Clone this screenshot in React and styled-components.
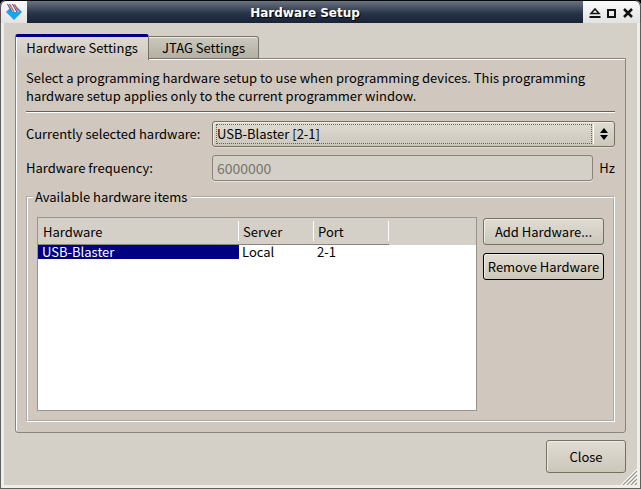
import React from "react";
import styled, { createGlobalStyle } from "styled-components";

const GlobalStyle = createGlobalStyle`
  *, *::before, *::after { box-sizing: border-box; }
  body { margin: 0; background: #000; }
  button, input, select { font: inherit; color: inherit; margin: 0; }
`;

const Window = styled.main`
  display: flex;
  flex-direction: column;
  min-height: 100vh;
  background: #d4d0c8;
  color: #000;
  font: 13px/18px "Noto Sans CJK SC", "Noto Sans", sans-serif;
  border-radius: 6px 6px 0 0;
  overflow: hidden;
`;

const TitleBar = styled.header`
  display: flex;
  height: 23px;
  border-top: 1px solid #05070b;
  background: linear-gradient(#6d7380 0, #4a5463 6px, #28354a 12px, #182434 100%);
`;

const TitleEnd = styled.div`
  display: flex;
  align-items: center;
  justify-content: center;
  gap: 3px;
  width: ${(p) => p.$width}px;
  background: linear-gradient(#fafafa, #e2e2e2);
  border: solid #555;
  border-width: ${(p) => (p.$right ? "0 1px 0 0" : "0 0 0 1px")};
  border-radius: ${(p) => (p.$right ? "0 6px 0 0" : "6px 0 0 0")};
`;

const Title = styled.h1`
  flex: 1;
  margin: 0;
  color: #fff;
  text-align: center;
  font: bold 12px/24px "DejaVu Sans", sans-serif;
  text-shadow: 1px 1px 1px #000;
`;

const WindowButton = styled.button`
  display: flex;
  padding: 0;
  border: 0;
  background: none;
`;

const Body = styled.div`
  flex: 1;
  display: flex;
  flex-direction: column;
  padding: 11px 11px 12px;
  border: solid #eeeeea;
  border-width: 0 3px 3px;
`;

const Frame = styled.div`
  flex: 1;
  display: flex;
  border: solid #60605c;
  border-width: 0 1px 1px;
`;

const TabList = styled.div`
  display: flex;
  align-items: flex-end;
  height: 25px;
  margin-bottom: -1px;
`;

const Tab = styled.button`
  position: relative;
  padding: 0;
  color: #000;
  border: 1px solid #77736a;
  ${(p) =>
    p.$active
      ? `
    width: 134px;
    height: 26px;
    padding-bottom: 2px;
    margin-bottom: -1px;
    border-top: 3px solid #000080;
    border-bottom: 0;
    border-radius: 3px 3px 0 0;
    background: linear-gradient(#dedad2, #d0c8be);
    box-shadow: inset 1px 0 #fff;
  `
      : `
    width: 110px;
    height: 23px;
    border-left: 0;
    border-radius: 0 3px 0 0;
    background: linear-gradient(#cbc8bd, #b4b0a3);
    box-shadow: inset 0 1px #eeece6;
  `}
`;

const Panel = styled.section`
  flex: 1;
  display: flex;
  flex-direction: column;
  padding: 10px 10px 10px;
  border: 1px solid #8b8377;
  border-radius: 0 0 3px 3px;
  background: #d0c8be;
  box-shadow: inset 1px 1px #fff;
`;

const Intro = styled.p`
  margin: 0;
`;

const Divider = styled.hr`
  width: 100%;
  margin: 6px 0 8px;
  border: solid;
  border-width: 1px 0;
  border-color: #66625b #fff #fff;
`;

const Form = styled.div`
  display: grid;
  grid-template-columns: 180px 1fr auto;
  column-gap: 6px;
  row-gap: 8px;
  align-items: center;
`;

const SelectBox = styled.div`
  grid-column: 2 / 4;
  display: grid;
  grid-template-columns: 1fr 21px;
  height: 26px;
  border: 1px solid #77705f;
  border-radius: 3px;
  background: linear-gradient(#e0dcd3, #cbc7bb);
  box-shadow: inset 1px 1px #eeece6, 0 1px #e2ddd5;
`;

const Select = styled.select`
  grid-area: 1 / 1 / 2 / 3;
  appearance: none;
  min-width: 0;
  margin: 2px 22px 2px 3px;
  padding: 0;
  border: 1px dotted #68645c;
  background: none;
  outline: 0;
`;

const Stepper = styled.span`
  grid-area: 1 / 2 / 2 / 3;
  display: flex;
  align-items: center;
  justify-content: center;
  margin: 2px 0;
  border-left: 1px solid #fff;
  pointer-events: none;
`;

const Input = styled.input`
  min-width: 0;
  width: 100%;
  height: 26px;
  padding: 0 4px;
  border: 1px solid #8b8377;
  border-radius: 3px;
  background: #d4d0c8;
  color: #77746d;
  font-size: 14px;
  box-shadow: 0 1px #e9e5de;
`;

const Group = styled.fieldset`
  flex: 1;
  display: flex;
  gap: 6px;
  min-width: 0;
  margin: 7px 0 0;
  padding: 10px 9px 9px;
  border: 2px groove #fff;
`;

const Legend = styled.legend`
  margin-left: -4px;
  padding: 0 4px 0 2px;
`;

const TableFrame = styled.div`
  flex: 1;
  margin-top: 1px;
  border: 1px solid #99958b;
  background: #fff;
`;

const Table = styled.table`
  width: 100%;
  table-layout: fixed;
  border-collapse: separate;
  border-spacing: 0;
  text-align: left;
`;

const HeadCell = styled.th`
  width: ${(p) => p.$width};
  height: 27px;
  padding: 2px 4px 0;
  font-weight: normal;
  background: #d4d0c8;
  &:first-child { padding-left: 5px; }
  ${(p) =>
    p.$width !== "auto" &&
    `
    border-bottom: 1px solid #8b8377;
    background: linear-gradient(#fff, #fff) right 3px / 1px 20px no-repeat #d4d0c8;
  `}
`;

const Cell = styled.td`
  height: 14px;
  padding: 0 3px;
  line-height: 14px;
  &:first-child { padding-left: 4px; }
  ${(p) => p.$selected && "background: #000080; color: #fff;"}
`;

const Actions = styled.div`
  display: flex;
  flex-direction: column;
  gap: 8px;
  width: 121px;
  padding-top: 2px;
`;

const Button = styled.button`
  height: ${(p) => (p.$large ? 33 : 27)}px;
  padding: 0;
  white-space: nowrap;
  border: 1px solid ${(p) => (p.$focused ? "#000" : "#77705f")};
  border-radius: 3px;
  background: linear-gradient(#e0dcd3, #cbc7bb);
  box-shadow: inset 1px 1px #eeece6;
  ${(p) => p.$large && "width: 80px;"}
`;

const Footer = styled.footer`
  display: flex;
  justify-content: flex-end;
  padding-top: 7px;
`;

const Grip = styled.svg`
  position: absolute;
  right: 4px;
  bottom: 4px;
`;

const Shell = styled.div`
  position: relative;
`;

const Logo = () => (
  <svg width="18" height="18" viewBox="0 0 18 18" aria-hidden="true">
    <path d="M9 1 17 9 9 17 1 9Z" fill="#14a6f0" />
    <path d="M2 1h7l5 8H7Z" fill="#fff" />
    <path d="M2.500 1l4.500 8M7.500 1l4.500 8" stroke="#3a5fa8" strokeWidth="1.200" />
    <path d="M4.500 1l4.500 8M9.500 1.500l4 7" stroke="#e8503f" strokeWidth="1.500" />
  </svg>
);

const items = [{ hardware: "USB-Blaster", server: "Local", port: "2-1" }];

export default function App() {
  return (
    <Shell>
      <GlobalStyle />
      <Window>
        <TitleBar>
          <TitleEnd $width={27}>
            <Logo />
          </TitleEnd>
          <Title>Hardware Setup</Title>
          <TitleEnd $width={58} $right>
            <WindowButton aria-label="Shade">
              <svg width="14" height="14" fill="none" stroke="#111">
                <path d="M3 8.500h8L7 4Z" strokeWidth="1.500" />
                <path d="M1.500 12h11" strokeWidth="2" />
              </svg>
            </WindowButton>
            <WindowButton aria-label="Maximize">
              <svg width="14" height="14" fill="none" stroke="#111">
                <rect x="3" y="5" width="7" height="7" strokeWidth="2" />
              </svg>
            </WindowButton>
            <WindowButton aria-label="Close window">
              <svg width="14" height="14" fill="none" stroke="#111">
                <path d="m2 4 8 8M10 4l-8 8" strokeWidth="2.500" />
              </svg>
            </WindowButton>
          </TitleEnd>
        </TitleBar>
        <Frame>
          <Body>
            <TabList role="tablist">
              <Tab role="tab" aria-selected="true" $active>
                Hardware Settings
              </Tab>
              <Tab role="tab" aria-selected="false">
                JTAG Settings
              </Tab>
            </TabList>
            <Panel role="tabpanel">
              <Intro>
                Select a programming hardware setup to use when programming devices. This programming
                hardware setup applies only to the current programmer window.
              </Intro>
              <Divider />
              <Form>
                <label htmlFor="hardware">Currently selected hardware:</label>
                <SelectBox>
                  <Select id="hardware" defaultValue="usb">
                    <option value="usb">USB-Blaster [2-1]</option>
                  </Select>
                  <Stepper>
                    <svg width="8" height="12" aria-hidden="true">
                      <path d="M0 5 4 0l4 5ZM0 7h8l-4 5Z" />
                    </svg>
                  </Stepper>
                </SelectBox>
                <label htmlFor="frequency">Hardware frequency:</label>
                <Input id="frequency" defaultValue="6000000" disabled />
                <span>Hz</span>
              </Form>
              <Group>
                <Legend>Available hardware items</Legend>
                <TableFrame>
                  <Table>
                    <thead>
                      <tr>
                        <HeadCell $width="201px">Hardware</HeadCell>
                        <HeadCell $width="75px">Server</HeadCell>
                        <HeadCell $width="75px">Port</HeadCell>
                        <HeadCell as="td" $width="auto" />
                      </tr>
                    </thead>
                    <tbody>
                      {items.map((item) => (
                        <tr key={item.hardware}>
                          <Cell $selected>{item.hardware}</Cell>
                          <Cell>{item.server}</Cell>
                          <Cell>{item.port}</Cell>
                          <Cell />
                        </tr>
                      ))}
                    </tbody>
                  </Table>
                </TableFrame>
                <Actions>
                  <Button>Add Hardware...</Button>
                  <Button $focused>Remove Hardware</Button>
                </Actions>
              </Group>
            </Panel>
            <Footer>
              <Button $large>Close</Button>
            </Footer>
          </Body>
        </Frame>
      </Window>
      <Grip width="16" height="16" fill="none" aria-hidden="true">
        <path d="M0 16 16 0M4 16 16 4M8 16l8-8M12 16l4-4" stroke="#fff" />
        <path d="M2 16 16 2M6 16 16 6M10 16l6-6M14 16l2-2" stroke="#96928a" />
      </Grip>
    </Shell>
  );
}
